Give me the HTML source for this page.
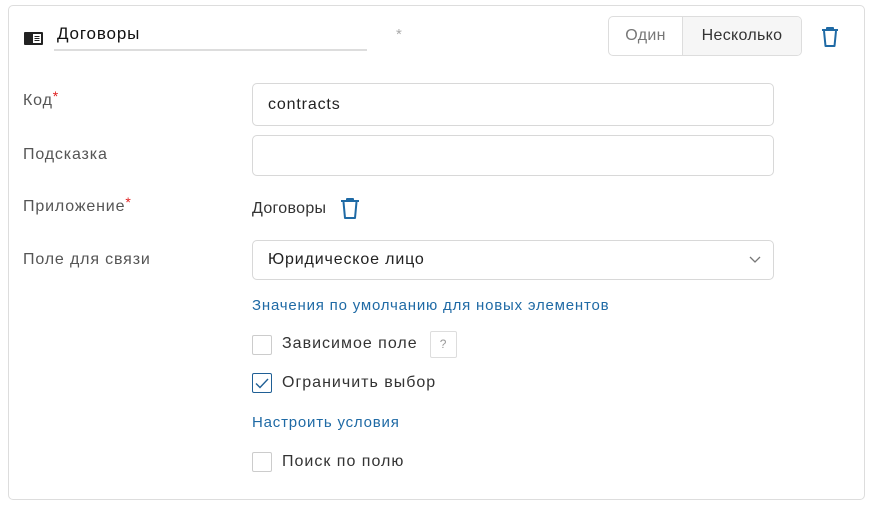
<!DOCTYPE html>
<html><head><meta charset="utf-8"><style>
*{box-sizing:border-box;margin:0;padding:0}
body{width:875px;height:507px;background:#fff;font-family:"Liberation Sans",sans-serif;position:relative;overflow:hidden;color:#222;letter-spacing:0.85px}
.card{position:absolute;left:8px;top:5px;width:857px;height:495px;border:1px solid #ddd;border-radius:5px}
.a{position:absolute}
.lbl{position:absolute;left:23px;font-size:16px;color:#555}
.lbl b{color:#e02020;font-weight:normal;position:relative;top:-4px;font-size:14px}
.inp{position:absolute;left:252px;width:522px;border:1px solid #d8d8d8;border-radius:5px;font-size:16px;padding-left:15px;display:flex;align-items:center;color:#222}
.link{position:absolute;left:252px;font-size:15px;color:#1f6aa5;letter-spacing:0.8px}
.cb{position:absolute;left:252px;width:20px;height:20px;border:1px solid #ccc;border-radius:2px}
.cbt{position:absolute;left:282px;font-size:16px;color:#333;letter-spacing:1px}
</style></head><body>
<div class="card"></div>
<svg class="a" style="left:24px;top:32px" width="20" height="14" viewBox="0 0 20 14"><rect x="0" y="0" width="19" height="13" rx="1" fill="#222"/><rect x="9" y="2" width="8" height="9" fill="#fff"/><path d="M10.5 4.5h5M10.5 6.5h5M10.5 8.5h5" stroke="#222" stroke-width="1"/></svg>
<div class="a" style="left:57px;top:24px;font-size:17px;color:#111">Договоры</div>
<div class="a" style="left:54px;top:49px;width:313px;height:2px;background:#ddd"></div>
<div class="a" style="left:396px;top:26px;font-size:15px;color:#aaa">*</div>
<div class="a" style="left:608px;top:16px;width:194px;height:40px;border:1px solid #ddd;border-radius:5px;overflow:hidden;display:flex;font-size:16px;letter-spacing:0.3px">
<div style="width:74px;display:flex;align-items:center;justify-content:center;color:#777;border-right:1px solid #ddd">Один</div>
<div style="flex:1;display:flex;align-items:center;justify-content:center;background:#f6f6f6;color:#333">Несколько</div></div>
<svg class="a" style="left:820px;top:26px" width="20" height="22" viewBox="0 0 20 22"><path d="M2 4h16M7 4V2h6v2M4 5l1.5 15h9L16 5" fill="none" stroke="#1f6aa5" stroke-width="2" stroke-linejoin="round"/></svg>
<div class="lbl" style="top:92px">Код<b>*</b></div>
<div class="lbl" style="top:146px">Подсказка</div>
<div class="lbl" style="top:198px">Приложение<b>*</b></div>
<div class="lbl" style="top:251px">Поле для связи</div>
<div class="inp" style="top:83px;height:43px">contracts</div>
<div class="inp" style="top:135px;height:41px"></div>
<div class="a" style="left:252px;top:200px;font-size:16px;color:#333;letter-spacing:0.3px">Договоры</div>
<svg class="a" style="left:339px;top:197px" width="22" height="24" viewBox="0 0 22 24"><path d="M2 4h18M8 4V2h6v2M4.5 5l1.5 16h10l1.5-16" fill="none" stroke="#1f6aa5" stroke-width="2" stroke-linejoin="round"/></svg>
<div class="inp" style="top:240px;height:40px">Юридическое лицо</div>
<svg class="a" style="left:749px;top:256px" width="12" height="8" viewBox="0 0 12 8"><path d="M1 1l5 5 5-5" fill="none" stroke="#777" stroke-width="1.3"/></svg>
<div class="link" style="top:297px">Значения по умолчанию для новых элементов</div>
<div class="cb" style="top:335px"></div>
<div class="cbt" style="top:335px">Зависимое поле</div>
<div class="a" style="left:430px;top:331px;width:27px;height:27px;border:1px solid #ddd;border-radius:2px;font-size:12px;color:#999;text-align:center;line-height:25px">?</div>
<div class="cb" style="top:373px;border-color:#1f5f95"></div>
<svg class="a" style="left:255px;top:378px" width="14" height="11" viewBox="0 0 14 11"><path d="M1 5.5l4 4L13 1" fill="none" stroke="#1f5f95" stroke-width="1.4"/></svg>
<div class="cbt" style="top:374px">Ограничить выбор</div>
<div class="link" style="top:414px">Настроить условия</div>
<div class="cb" style="top:452px"></div>
<div class="cbt" style="top:453px">Поиск по полю</div>
</body></html>
